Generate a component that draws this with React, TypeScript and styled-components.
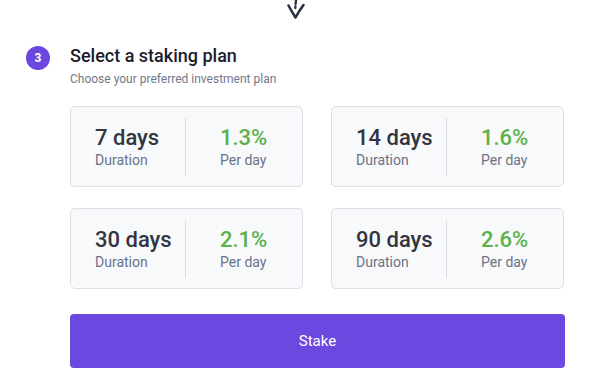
import React from "react";
import styled, { createGlobalStyle } from "styled-components";

const GlobalStyle = createGlobalStyle`
  body {
    margin: 0;
    background: #ffffff;
    font-family: Roboto, "Liberation Sans", sans-serif;
  }
`;

type Plan = {
  days: number;
  rate: string;
};

const plans: Plan[] = [
  { days: 7, rate: "1.3%" },
  { days: 14, rate: "1.6%" },
  { days: 30, rate: "2.1%" },
  { days: 90, rate: "2.6%" },
];

const App = () => {
  return (
    <Page>
      <GlobalStyle />
      <ArrowRow>
        <svg width="20" height="20" viewBox="0 0 20 20" fill="none">
          <path
            d="M10 0 L9.6 4 M9.4 6.5 L9.3 8"
            stroke="#2d3142"
            strokeWidth="2.4"
            strokeLinecap="round"
          />
          <path
            d="M2.5 5.5 Q6 12 9.5 17.5 Q13 11 17.5 5"
            stroke="#2d3142"
            strokeWidth="2.6"
            strokeLinecap="round"
            strokeLinejoin="round"
          />
        </svg>
      </ArrowRow>
      <Step>
        <Badge>3</Badge>
        <Header>
          <Title>Select a staking plan</Title>
          <Subtitle>Choose your preferred investment plan</Subtitle>
        </Header>
        <Body>
          <PlanGrid>
            {plans.map((plan) => (
              <PlanCard key={plan.days}>
                <DurationCol>
                  <Value>{plan.days} days</Value>
                  <Label>Duration</Label>
                </DurationCol>
                <Divider />
                <RateCol>
                  <Value green>{plan.rate}</Value>
                  <Label>Per day</Label>
                </RateCol>
              </PlanCard>
            ))}
          </PlanGrid>
          <StakeButton>Stake</StakeButton>
        </Body>
      </Step>
    </Page>
  );
};

export default App;

const Page = styled.div`
  width: 609px;
  height: 385px;
  padding: 0 44px 0 26px;
  box-sizing: border-box;
  overflow: hidden;
`;

const ArrowRow = styled.div`
  height: 20px;
  padding-left: 260px;
  margin-bottom: 26px;
  svg {
    display: block;
  }
`;

const Step = styled.div`
  display: grid;
  grid-template-columns: 24px 1fr;
  column-gap: 20px;
`;

const Badge = styled.div`
  width: 24px;
  height: 24px;
  border-radius: 50%;
  background: #6b47e0;
  color: #ffffff;
  font-size: 12px;
  font-weight: 700;
  display: flex;
  align-items: center;
  justify-content: center;
`;

const Header = styled.div`
  display: flex;
  flex-direction: column;
`;

const Title = styled.div`
  font-size: 18px;
  font-weight: 500;
  line-height: 20px;
  color: #1b1d2a;
`;

const Subtitle = styled.div`
  margin-top: 6px;
  font-size: 12px;
  line-height: 15px;
  color: #737889;
`;

const Body = styled.div`
  grid-column: 2;
  padding-top: 19px;
`;

const PlanGrid = styled.div`
  display: grid;
  grid-template-columns: 233px 233px;
  column-gap: 28px;
  row-gap: 21px;
`;

const PlanCard = styled.div`
  height: 81px;
  box-sizing: border-box;
  border: 1px solid #dcdfe5;
  border-radius: 5px;
  background: #f8f9fb;
  display: flex;
  align-items: stretch;
  padding: 11px 0 10px;
`;

const DurationCol = styled.div`
  width: 90px;
  padding-left: 24px;
  display: flex;
  flex-direction: column;
  justify-content: center;
`;

const RateCol = styled.div`
  flex: 1;
  padding-left: 34px;
  display: flex;
  flex-direction: column;
  justify-content: center;
`;

const Divider = styled.div`
  width: 1px;
  background: #d9dce1;
`;

const Value = styled.div<{ green?: boolean }>`
  font-size: 22px;
  font-weight: 500;
  line-height: 26px;
  color: ${(p) => (p.green ? "#5bb14a" : "#33353f")};
`;

const Label = styled.div`
  font-size: 14px;
  line-height: 18px;
  color: #6b7188;
`;

const StakeButton = styled.button`
  display: block;
  width: 495px;
  height: 54px;
  margin-top: 25px;
  border: none;
  border-radius: 4px;
  background: #6b48e0;
  color: #ffffff;
  font-family: Roboto, "Liberation Sans", sans-serif;
  font-size: 15px;
  cursor: pointer;
`;
